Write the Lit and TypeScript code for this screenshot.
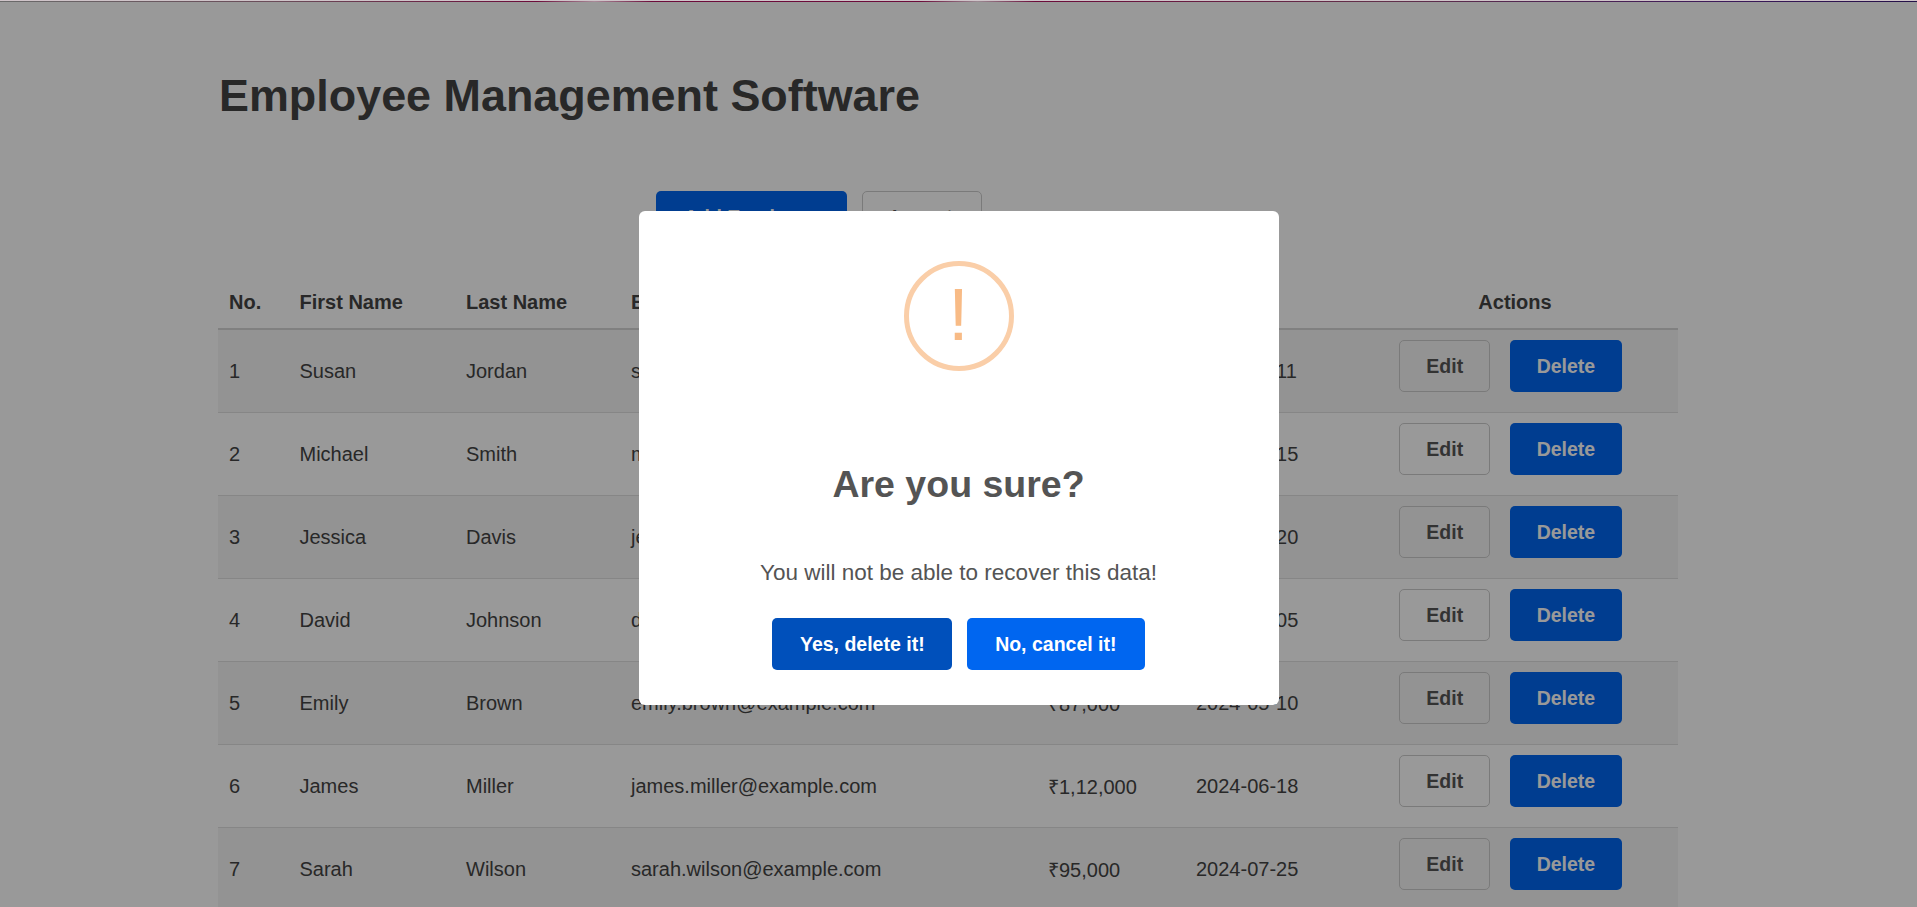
import { LitElement, html, css } from "lit";
import { customElement } from "lit/decorators.js";

const employees = [
  { first: "Susan", last: "Jordan", email: "susan.jordan@example.com", salary: "₹95,000", date: "2024-01-11" },
  { first: "Michael", last: "Smith", email: "michael.smith@example.com", salary: "₹88,000", date: "2024-02-15" },
  { first: "Jessica", last: "Davis", email: "jessica.davis@example.com", salary: "₹72,000", date: "2024-03-20" },
  { first: "David", last: "Johnson", email: "david.johnson@example.com", salary: "₹1,05,000", date: "2024-04-05" },
  { first: "Emily", last: "Brown", email: "emily.brown@example.com", salary: "₹87,000", date: "2024-05-10" },
  { first: "James", last: "Miller", email: "james.miller@example.com", salary: "₹1,12,000", date: "2024-06-18" },
  { first: "Sarah", last: "Wilson", email: "sarah.wilson@example.com", salary: "₹95,000", date: "2024-07-25" },
];

@customElement("app-root")
export class AppRoot extends LitElement {
  static styles = css`
    * {
      margin: 0;
      padding: 0;
      box-sizing: border-box;
    }

    :host {
      display: block;
      height: 100vh;
      overflow: hidden;
      background: #fff;
      color: #444;
      font-family: "Liberation Sans", Arial, sans-serif;
    }

    .strip {
      position: relative;
      z-index: 2;
      height: 2px;
      background: #cfc4c9;
    }

    .strip::after {
      content: "";
      display: block;
      height: 1px;
      transform: translateY(1px);
      background: linear-gradient(
        90deg,
        #6a6a6a 0,
        #6a4a58 15%,
        #6c0c3a 28%,
        #a88a98 31%,
        #6c0c3a 34%,
        #6c0c3a 48%,
        #9a8a92 51%,
        #6c0c3a 54%,
        #62304a 72%,
        #3c1a5a 90%,
        #241048 100%
      );
    }

    .page {
      padding: 68px 0 0 218px;
      width: 1678px;
    }

    h1 {
      margin-left: 1px;
      font-size: 44.9px;
      line-height: 51px;
      font-weight: 700;
    }

    .toolbar {
      display: flex;
      gap: 15px;
      margin: 70px 0 34px;
      padding-left: 438px;
    }

    .btn {
      display: flex;
      align-items: center;
      justify-content: center;
      height: 52px;
      padding: 0 26px;
      border: 1px solid transparent;
      border-radius: 5px;
      font-family: inherit;
      font-size: 19.5px;
      font-weight: 700;
      white-space: nowrap;
    }

    .wide {
      padding: 0 27px;
    }

    .primary {
      background: #0066f0;
      color: #fff;
    }

    .outline {
      background: transparent;
      border-color: #ccc;
      color: #555;
    }

    .import {
      padding: 0 28.6px;
    }

    table {
      width: 1460px;
      table-layout: fixed;
      border-collapse: collapse;
      font-size: 20px;
    }

    th {
      height: 52px;
      padding: 0 10px;
      text-align: left;
      font-weight: 700;
      border-bottom: 2px solid #d6d6d6;
    }

    th.actions {
      text-align: center;
    }

    th:first-child,
    td:first-child {
      padding-left: 11px;
    }

    td {
      height: 83px;
      padding: 10px;
      border-bottom: 1px solid #e0e0e0;
    }

    tbody tr:nth-child(odd) {
      background: #f5f5f5;
    }

    .row-actions {
      display: flex;
      justify-content: center;
      gap: 20px;
      padding: 0 9px 10px 0;
    }

    .row-actions .primary {
      padding: 0 25.5px;
    }

    .overlay {
      position: fixed;
      inset: 0;
      z-index: 1;
      display: flex;
      justify-content: center;
      align-items: flex-start;
      padding-top: 211px;
      background: rgba(0, 0, 0, 0.4);
    }

    .modal {
      display: flex;
      flex-direction: column;
      align-items: center;
      width: 640px;
      padding: 50px 0 35px;
      background: #fff;
      border-radius: 6px;
      color: #545454;
    }

    .icon {
      display: flex;
      align-items: center;
      justify-content: center;
      width: 110px;
      height: 110px;
      padding-bottom: 3px;
      border: 5px solid #facea8;
      border-radius: 50%;
      color: #f8bb86;
      font-size: 75px;
      line-height: 1;
    }

    h2 {
      margin-top: 91px;
      font-size: 37.5px;
      line-height: 45px;
      font-weight: 700;
    }

    p {
      margin-top: 49px;
      font-size: 22.5px;
      line-height: 34px;
    }

    .modal-actions {
      display: flex;
      gap: 15px;
      margin-top: 28px;
    }

    .yes {
      padding: 0 26.5px;
      background: #0050bb;
      color: #fff;
    }
  `;

  render() {
    return html`
      <div class="strip"></div>
      <div class="page">
        <h1>Employee Management Software</h1>
        <div class="toolbar">
          <button class="btn primary wide">Add Employee</button>
          <button class="btn outline import">Import</button>
        </div>
        <table>
          <colgroup>
            <col style="width: 71.5px" />
            <col style="width: 166.5px" />
            <col style="width: 165px" />
            <col style="width: 417px" />
            <col style="width: 148px" />
            <col style="width: 166px" />
            <col style="width: 326px" />
          </colgroup>
          <thead>
            <tr>
              <th>No.</th>
              <th>First Name</th>
              <th>Last Name</th>
              <th>Email</th>
              <th>Salary</th>
              <th>Date</th>
              <th class="actions">Actions</th>
            </tr>
          </thead>
          <tbody>
            ${employees.map(
              (e, i) => html`
                <tr>
                  <td>${i + 1}</td>
                  <td>${e.first}</td>
                  <td>${e.last}</td>
                  <td>${e.email}</td>
                  <td>${e.salary}</td>
                  <td>${e.date}</td>
                  <td>
                    <div class="row-actions">
                      <button class="btn outline">Edit</button>
                      <button class="btn primary">Delete</button>
                    </div>
                  </td>
                </tr>
              `
            )}
          </tbody>
        </table>
      </div>
      <div class="overlay">
        <div class="modal">
          <div class="icon">!</div>
          <h2>Are you sure?</h2>
          <p>You will not be able to recover this data!</p>
          <div class="modal-actions">
            <button class="btn yes">Yes, delete it!</button>
            <button class="btn primary wide">No, cancel it!</button>
          </div>
        </div>
      </div>
    `;
  }
}
